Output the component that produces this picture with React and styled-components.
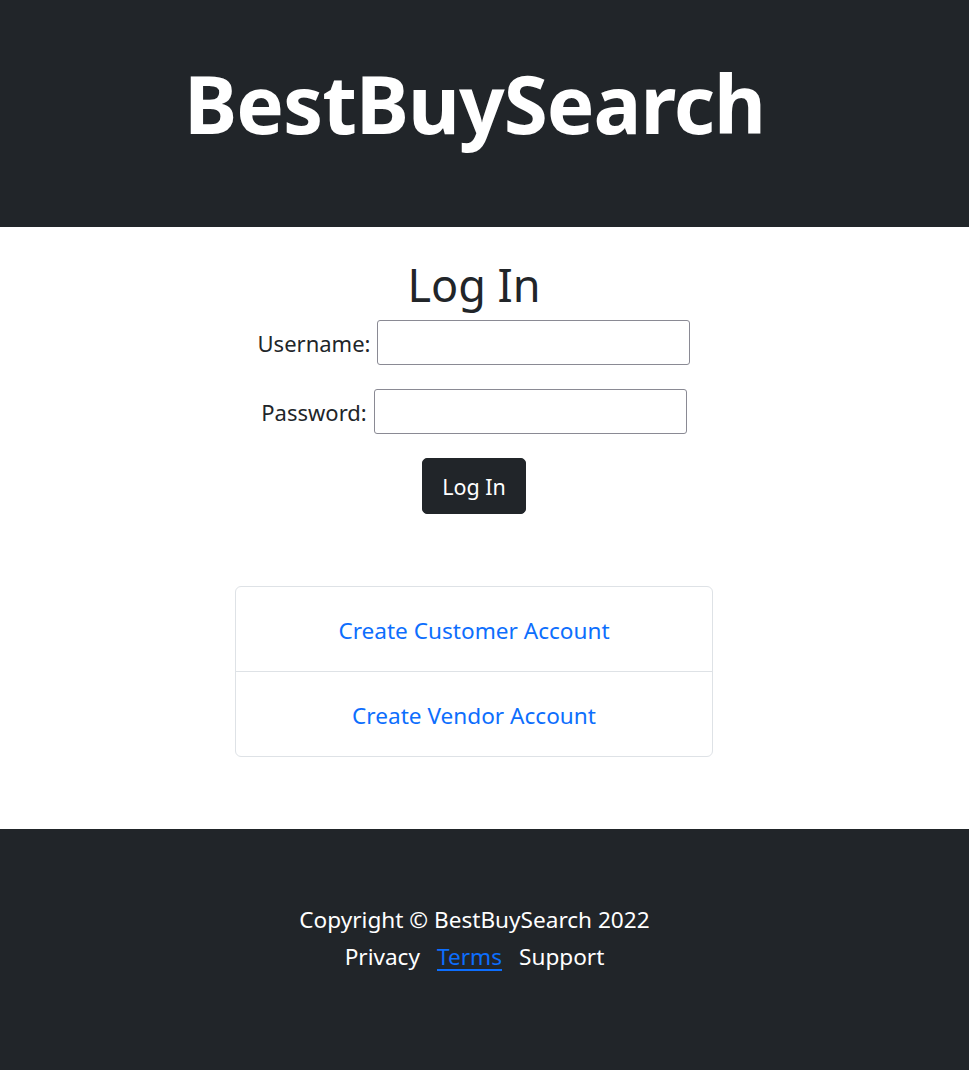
import React from "react";
import styled, { createGlobalStyle } from "styled-components";

const Global = createGlobalStyle`
  html, body { margin: 0; padding: 0; background: #fff; }
  body { font-family: "Noto Sans", "Open Sans", sans-serif; color: #212529; }
  * { box-sizing: border-box; }
`;

const Page = styled.div`
  display: flex;
  flex-direction: column;
  min-height: 1070px;
`;

const Header = styled.header`
  background: #212529;
  height: 227px;
  display: flex;
  align-items: center;
  justify-content: center;
  padding: 0 20px 22px 0;
`;

const Brand = styled.h1`
  margin: 0;
  color: #fff;
  font-weight: 700;
  font-size: 80px;
  letter-spacing: -1px;
  line-height: 1;
`;

const Main = styled.main`
  flex: 1;
  display: flex;
  flex-direction: column;
  align-items: center;
  padding: 27px 21px 70px 0;
`;

const Title = styled.h2`
  margin: 0;
  font-weight: 400;
  font-size: 45px;
  line-height: 62px;
`;

const Form = styled.form`
  display: flex;
  flex-direction: column;
  align-items: center;
  gap: 24px;
  margin-top: 4px;
`;

const Row = styled.div`
  display: flex;
  align-items: center;
  gap: 7px;
`;

const Label = styled.label`
  font-size: 22px;
`;

const Input = styled.input`
  width: 313px;
  height: 45px;
  border: 1px solid #8a8a94;
  border-radius: 3px;
  background: #fff;
  font-size: 20px;
`;

const Button = styled.button`
  background: #212529;
  color: #fff;
  border: 1px solid #212529;
  border-radius: 5px;
  width: 104px;
  height: 56px;
  font-family: inherit;
  font-size: 21.5px;
  padding: 0;
`;

const Card = styled.div`
  margin-top: 72px;
  width: 478px;
  border: 1px solid #dee2e6;
  border-radius: 6px;
  display: flex;
  flex-direction: column;
`;

const CardItem = styled.div`
  height: ${(p) => p.$h}px;
  display: flex;
  align-items: center;
  justify-content: center;
  padding-top: 3px;
  & + & { border-top: 1px solid #dee2e6; }
`;

const CardLink = styled.a`
  color: #0d6efd;
  text-decoration: none;
  font-size: 22.6px;
`;

const Footer = styled.footer`
  background: #212529;
  height: 241px;
  display: flex;
  flex-direction: column;
  align-items: center;
  justify-content: center;
  padding: 0 20px 24px 0;
  color: #fff;
  font-size: 22.6px;
  line-height: 37px;
`;

const FooterLinks = styled.div`
  display: flex;
  gap: 17px;
`;

const FooterLink = styled.a`
  color: ${(p) => (p.$active ? "#0d6efd" : "#fff")};
  text-decoration: ${(p) => (p.$active ? "underline" : "none")};
  text-underline-offset: 4px;
`;

export default function App() {
  return (
    <Page>
      <Global />
      <Header>
        <Brand>BestBuySearch</Brand>
      </Header>
      <Main>
        <Title>Log In</Title>
        <Form onSubmit={(e) => e.preventDefault()}>
          <Row>
            <Label htmlFor="u">Username:</Label>
            <Input id="u" type="text" />
          </Row>
          <Row>
            <Label htmlFor="p">Password:</Label>
            <Input id="p" type="password" />
          </Row>
          <Button type="submit">Log In</Button>
        </Form>
        <Card>
          <CardItem $h={84}>
            <CardLink href="#">Create Customer Account</CardLink>
          </CardItem>
          <CardItem $h={85}>
            <CardLink href="#">Create Vendor Account</CardLink>
          </CardItem>
        </Card>
      </Main>
      <Footer>
        <div>Copyright © BestBuySearch 2022</div>
        <FooterLinks>
          <FooterLink href="#">Privacy</FooterLink>
          <FooterLink href="#" $active>Terms</FooterLink>
          <FooterLink href="#">Support</FooterLink>
        </FooterLinks>
      </Footer>
    </Page>
  );
}
